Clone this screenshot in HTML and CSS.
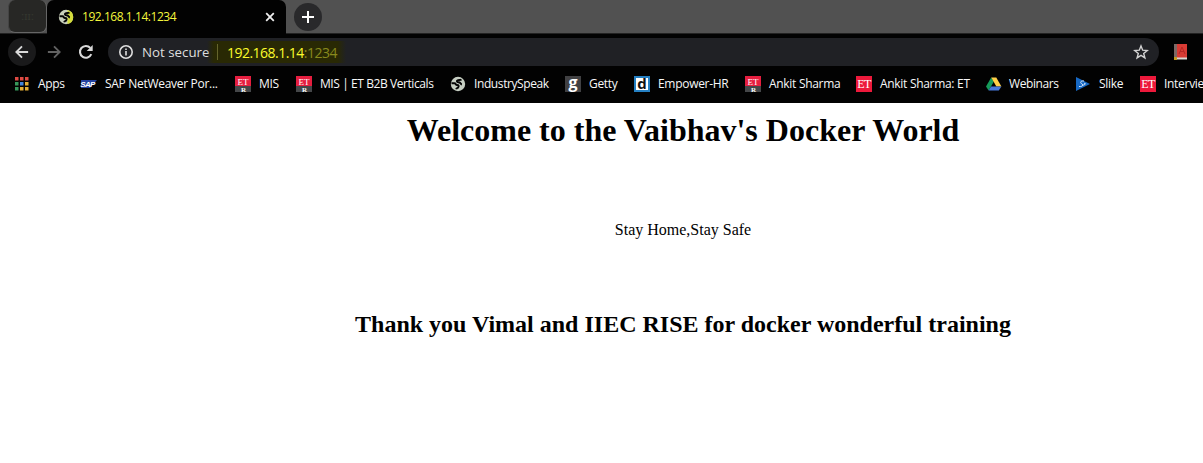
FILE: index.html
```
<!DOCTYPE html>
<html lang="en">
<head>
<meta charset="utf-8">
<title>192.168.1.14:1234</title>
<link rel="stylesheet" href="styles.css">
</head>
<body>
<header class="browser">
  <div class="tabs">
    <div class="pinned"><span>ːɪɪː</span></div>
    <div class="tab">
      <svg class="icon tab-globe" viewBox="0 0 16 16"><circle cx="8" cy="8" r="7.200" fill="#c9d0bc"/><path d="M9.500.95a7.200 7.200 0 0 1 0 14.100z" fill="#d3dc3c"/><path class="land" d="M1.500 7.300H4.500C6 7.300 5.500 9 7 9c1.700 0 2 1 1.200 2.300-.5.700-1.700.9-2 1.900M11.500 3.500C10 4.500 7.500 3.200 7 4.800c-.4 1.500 2 1.200 3 1.900.8.600.8 1.500 1.900 1.700"/></svg>
      <span class="tab-title">192.168.1.14:1234</span>
      <svg class="close" viewBox="0 0 10 10"><path d="M1.200 1.200l7.600 7.600M8.800 1.200L1.200 8.800"/></svg>
    </div>
    <div class="new-tab"><svg viewBox="0 0 14 14"><path d="M7 1v12M1 7h12"/></svg></div>
  </div>

  <div class="toolbar">
    <div class="nav back"><svg viewBox="0 0 16 16"><path d="M15 8H2M8 1.500L1.500 8 8 14.500"/></svg></div>
    <div class="nav forward"><svg viewBox="0 0 16 16"><path d="M1 8h13M8 1.500L14.500 8 8 14.500"/></svg></div>
    <div class="nav reload"><svg viewBox="0 0 16 16"><path d="M13.300 10.200A5.900 5.900 0 1 1 12.300 3.900"/><path class="tip" d="M14.700 1v6H8.700z"/></svg></div>
    <div class="address">
      <svg class="info" viewBox="0 0 14 14"><circle cx="7" cy="7" r="6.200"/><path d="M7 6v4.400M7 3.400v1.600"/></svg>
      <span class="insecure">Not secure</span>
      <div class="url"><i></i><span class="host">192.168.1.14</span><span class="port">:1234</span></div>
      <svg class="star" viewBox="0 0 16 16"><path d="M8 1.900l1.700 4.300 4.500.3-3.500 2.900 1.200 4.500L8 11.400l-3.900 2.500 1.200-4.500L1.800 6.500l4.500-.3z"/></svg>
    </div>
    <svg class="extension" viewBox="0 0 14 16"><path d="M1 0h13v14H1z" fill="#d83b34"/><path d="M1 0h3v14H1z" fill="#7c6965"/><path d="M6 10l3-7 3 7M7 7.500h4" fill="none" stroke="#b82623"/><path d="M3 13.500h11v2H3z" fill="#ddd8d2"/><path d="M1 13h3v3H1z" fill="#c39a20"/></svg>
  </div>

  <nav class="bookmarks">
    <a class="bm apps"><svg class="icon" viewBox="0 0 16 16">
      <path fill="#df4a43" d="M0 1h3.500v3.500H0zM5 1h3.500v3.500H5zM10 1h3.500v3.500H10z"/>
      <path fill="#37975a" d="M0 6h3.500v3.500H0zM0 11h3.500v3.500H0z"/><path fill="#4285dc" d="M5 6h3.500v3.500H5z"/>
      <path fill="#e3ae35" d="M10 6h3.500v3.500H10zM5 11h3.500v3.500H5zM10 11h3.500v3.500H10z"/></svg><span>Apps</span></a>
    <a class="bm sap"><svg class="icon" viewBox="0 0 16 16"><path d="M1 4h16l-7 8H1z" fill="#2341a0"/><text x="7.500" y="11" class="sap-text">SAP</text></svg><span>SAP NetWeaver Por...</span></a>
    <a class="bm mis"><svg class="icon" viewBox="0 0 16 16"><rect width="16" height="10" fill="#e61e3f"/><rect y="10" width="16" height="6" fill="#454749"/><text x="8" y="8.500" class="et-small">ET</text><text x="8.500" y="15.500" class="b-small">R</text></svg><span>MIS</span></a>
    <a class="bm verticals"><svg class="icon" viewBox="0 0 16 16"><rect width="16" height="10" fill="#e61e3f"/><rect y="10" width="16" height="6" fill="#454749"/><text x="8" y="8.500" class="et-small">ET</text><text x="8.500" y="15.500" class="b-small">R</text></svg><span>MIS | ET B2B Verticals</span></a>
    <a class="bm industry"><svg class="icon" viewBox="0 0 16 16"><circle cx="8" cy="8" r="7.200" fill="#c6cec2"/><path class="land" d="M1.500 7.300H4.500C6 7.300 5.500 9 7 9c1.700 0 2 1 1.200 2.300-.5.700-1.700.9-2 1.900M11.500 3.500C10 4.500 7.500 3.200 7 4.800c-.4 1.500 2 1.200 3 1.900.8.600.8 1.500 1.900 1.700"/></svg><span>IndustrySpeak</span></a>
    <a class="bm getty"><svg class="icon" viewBox="0 0 16 16"><rect width="16" height="16" fill="#414143"/><text x="8" y="11.500" class="g-text">g</text></svg><span>Getty</span></a>
    <a class="bm empower"><svg class="icon" viewBox="0 0 16 16"><rect width="16" height="16" fill="#2580c3"/><rect x="2" y="2" width="12" height="12" fill="#fff"/><text x="8" y="13" class="d-text">d</text></svg><span>Empower-HR</span></a>
    <a class="bm ankit"><svg class="icon" viewBox="0 0 16 16"><rect width="16" height="10" fill="#e61e3f"/><rect y="10" width="16" height="6" fill="#454749"/><text x="8" y="8.500" class="et-small">ET</text><text x="8.500" y="15.500" class="b-small">R</text></svg><span>Ankit Sharma</span></a>
    <a class="bm ankit-et"><svg class="icon" viewBox="0 0 16 16"><rect width="16" height="16" fill="#ed193b"/><text x="8" y="12" class="et-large">ET</text></svg><span>Ankit Sharma: ET</span></a>
    <a class="bm webinars"><svg class="icon" viewBox="0 0 16 16"><path d="M5.200 1.500L0 10.500l2.600 4L7.800 5.700z" fill="#159b59"/><path d="M5.200 1.500h5.100l5.100 9h-5z" fill="#ffcf48"/><path d="M5 10.500h10.400l-2.600 4H2.600z" fill="#4678dc"/></svg><span>Webinars</span></a>
    <a class="bm slike"><svg class="icon" viewBox="0 0 16 16"><path d="M0 1l14 7-14 7z" fill="#1769c5"/><path d="M8 5C4 4.500 4 7 6 8s0 3-3 2.500M8 7.500c2-1 2 2-2 1.500" fill="none" stroke="#dbe9fb"/></svg><span>Slike</span></a>
    <a class="bm interview"><svg class="icon" viewBox="0 0 16 16"><rect width="16" height="16" fill="#ed193b"/><text x="8" y="12" class="et-large">ET</text></svg><span>Intervie</span></a>
  </nav>
</header>

<main class="page">
  <h1>Welcome to the Vaibhav's Docker World</h1>
  <p>Stay Home,Stay Safe</p>
  <h2>Thank you Vimal and IIEC RISE for docker wonderful training</h2>
</main>
</body>
</html>
```
FILE: styles.css
```
* { box-sizing: border-box; }
body { margin: 0; height: 463px; overflow: hidden; background: #fff; }
svg { display: block; flex: none; overflow: visible; }
.browser { height: 103px; background: #020202; font-family: "Open Sans", "Noto Sans", sans-serif; color: #f8f8f8; overflow: hidden; }
.icon { width: 16px; height: 16px; }
.land { fill: none; stroke: #050505; stroke-width: 2; stroke-linejoin: round; }

.tabs { display: flex; height: 34px; padding-left: 8px; background: linear-gradient(#515151 33px, #222 33px); }
.pinned { width: 39px; height: 33px; border: 1px solid #666; border-top: 0; border-left-color: #444; border-radius: 7px; background: #272725; display: flex; align-items: center; justify-content: center; }
.pinned span { font-size: 10px; line-height: 1; color: #34372f; }
.tab { display: flex; align-items: center; width: 239px; height: 34px; padding: 0 11px 1px 12px; border-radius: 7px 7px 0 0; background: #020202; }
.tab-globe { margin-left: -1px; }
.tab-title { margin-left: 8px; width: 183px; font-size: 12px; letter-spacing: -.45px; color: #f5f73c; white-space: nowrap; }
.close { width: 10px; height: 10px; }
.close path { stroke: #eee; stroke-width: 1.8; }
.new-tab { width: 28px; height: 28px; margin: 3px 0 0 8px; border-radius: 50%; background: #29292b; display: grid; place-items: center; }
.new-tab svg { width: 14px; height: 14px; }
.new-tab path { stroke: #fff; stroke-width: 2; }

.toolbar { display: flex; align-items: center; height: 36px; padding-left: 8px; }
.nav { width: 28px; height: 28px; border-radius: 50%; margin-right: 4px; display: grid; place-items: center; flex: none; }
.nav svg { width: 14px; height: 14px; }
.nav path { fill: none; stroke: #d9d9d9; stroke-width: 2.1; }
.nav .tip { fill: #d9d9d9; stroke: none; }
.back { background: #1a1a1b; }
.forward path { stroke: #626262; }
.reload svg { width: 16px; height: 16px; }
.address { display: flex; align-items: center; width: 1051px; height: 28px; margin-left: 4px; padding-left: 11px; border-radius: 14px; background: #202125; font-size: 14px; white-space: nowrap; }
.info { width: 14px; height: 14px; }
.info circle, .info path { fill: none; stroke: #dedede; stroke-width: 1.600; }
.insecure { width: 65px; margin-left: 9px; font-size: 13.3px; color: #dedede; }
.url { display: flex; align-items: center; width: 139px; height: 22px; padding-left: 10px; background: linear-gradient(90deg, #20212500, #292904 5%, #292904 94%, #202125); letter-spacing: -.52px; }
.url i { width: 1px; height: 16px; margin-right: 9px; background: #65652d; }
.host { color: #fcfc2c; }
.port { color: #88891d; }
.star { width: 16px; height: 16px; margin-left: 787px; }
.star path { fill: none; stroke: #d3d3d3; stroke-width: 1.400; }
.extension { width: 14px; height: 16px; margin-left: 14px; }

.bookmarks { display: flex; align-items: center; height: 28px; padding-left: 15px; font-size: 12px; white-space: nowrap; }
.bm { display: flex; align-items: center; gap: 8px; flex: none; }
.apps { width: 65px; gap: 7px; }
.sap { width: 155px; gap: 9px; }
.mis { width: 61px; }
.verticals { width: 154px; }
.industry { width: 115px; }
.getty { width: 69px; }
.empower { width: 111px; }
.ankit { width: 111px; }
.ankit-et { width: 130px; }
.webinars { width: 90px; gap: 7px; }
.slike { width: 64px; gap: 7px; }
.bm span { letter-spacing: -.3px; margin-top: -1px; }
.bm.verticals span { letter-spacing: -.42px; }
.bm.industry span, .bm.webinars span { letter-spacing: -.4px; }
.interview { width: 63px; overflow: hidden; }

.et-small, .et-large, .b-small { font-family: "Liberation Serif", serif; text-anchor: middle; fill: #fff; }
.et-small { font-size: 9px; }
.et-large { font-size: 12px; letter-spacing: -.5px; }
.b-small { font-size: 7px; font-weight: bold; }
.sap-text { font: italic bold 8px "Liberation Sans", sans-serif; letter-spacing: -.6px; text-anchor: middle; fill: #fff; }
.g-text { font: bold 16px "Open Sans", sans-serif; text-anchor: middle; fill: #fff; }
.d-text { font: bold 15px "Open Sans", sans-serif; text-anchor: middle; fill: #111; }

.page { padding: 9px 0 0 163px; font-family: "Liberation Serif", "Times New Roman", serif; color: #000; text-align: center; white-space: nowrap; }
h1 { margin: 0; font-size: 32px; line-height: 37px; }
p { margin: 72px 0 0; font-size: 16px; line-height: 18px; }
h2 { margin: 72px 0 0; font-size: 24px; line-height: 27px; }
```
